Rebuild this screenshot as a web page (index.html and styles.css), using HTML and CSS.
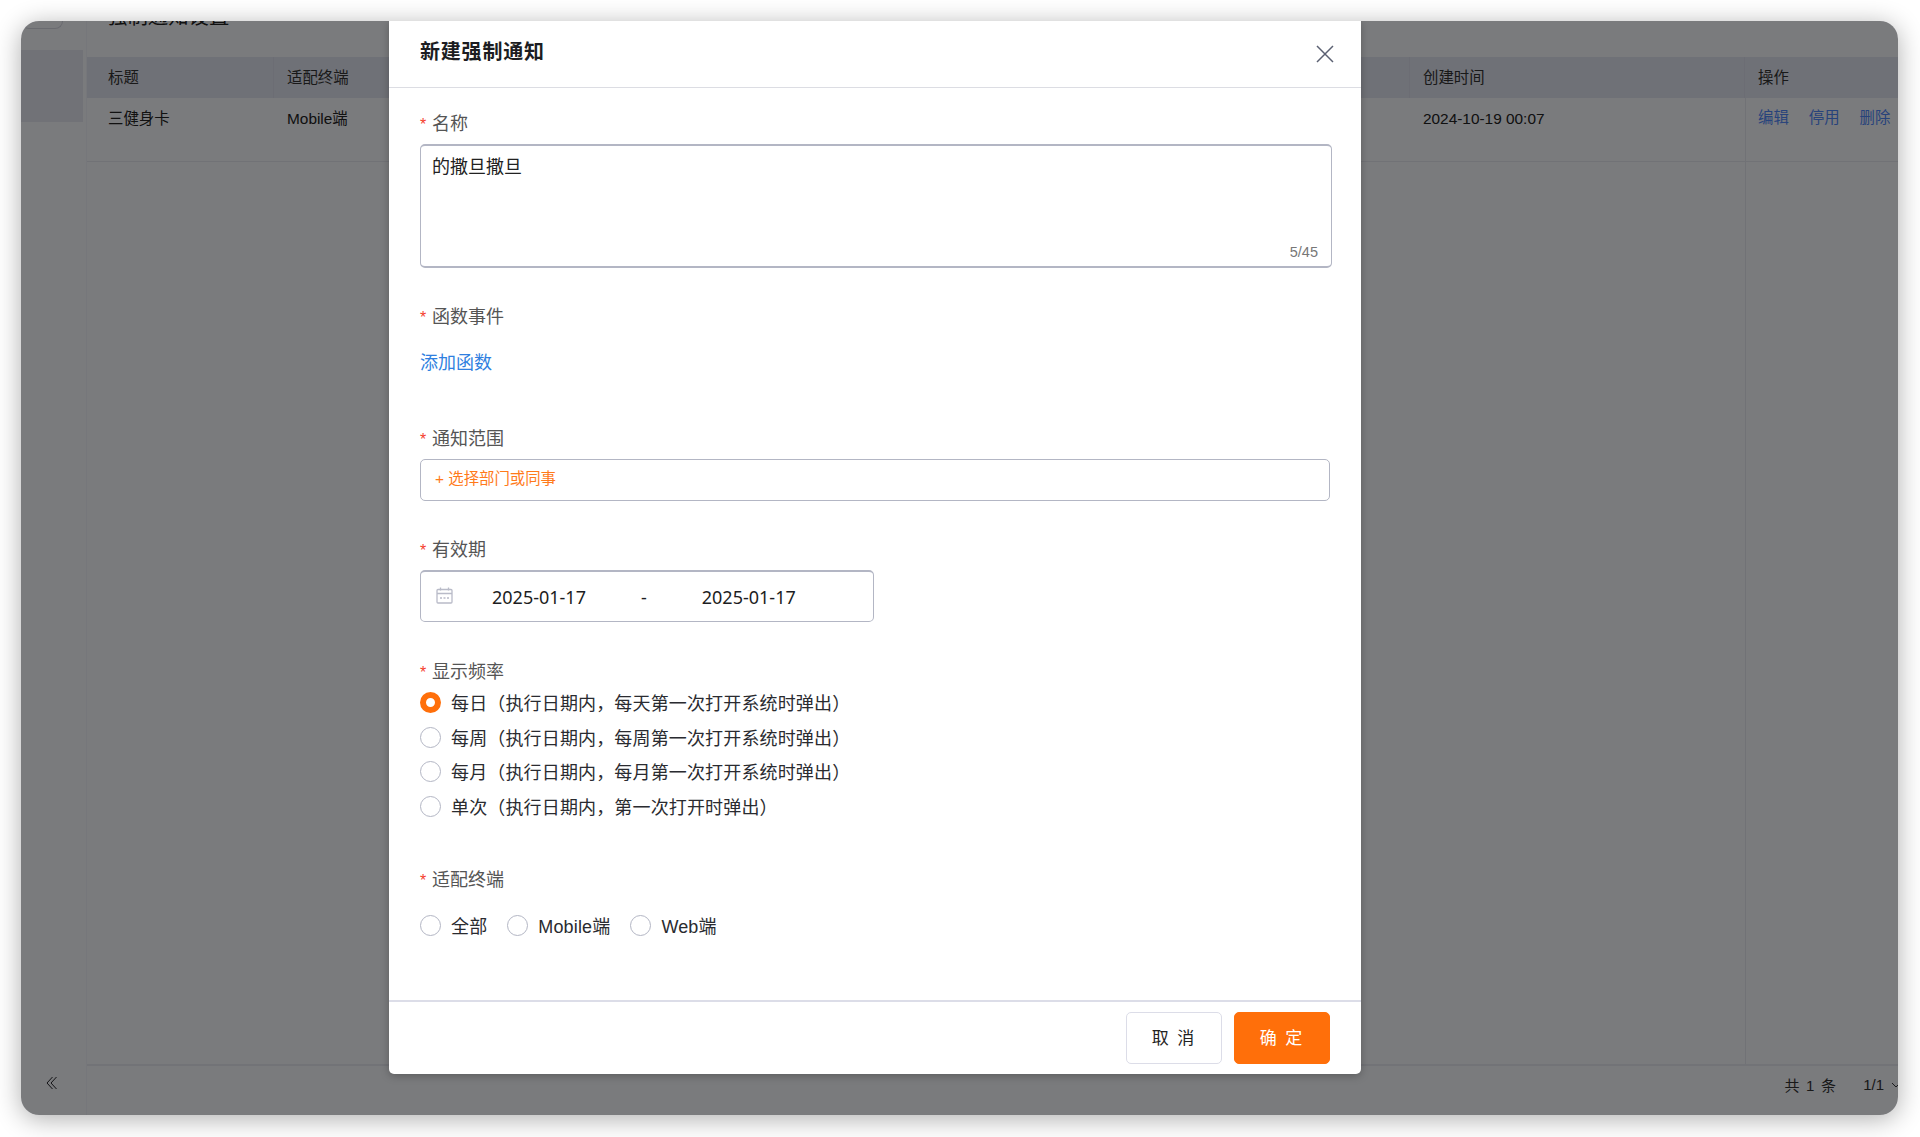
FILE: index.html
```html
<!DOCTYPE html>
<html lang="zh-CN">
<head>
    <meta charset="UTF-8">
    <meta name="viewport" content="width=device-width, initial-scale=1.0">
    <title>新建强制通知</title>
    <link rel="stylesheet" href="styles.css">
</head>
<body>
    <div class="window">
        <!-- Page behind the dialog -->
        <div class="page">
            <aside class="sidebar">
                <div class="sidebar-logo"></div>
                <div class="sidebar-item"></div>
                <div class="sidebar-collapse">
                    <svg width="11" height="14" viewBox="0 0 11 14" fill="none" stroke="#26272c" stroke-width="1">
                        <path d="M6.5 1 L1 7 L6.5 13"/>
                        <path d="M10.5 1 L5 7 L10.5 13"/>
                    </svg>
                </div>
            </aside>
            <main class="content">
                <div class="content-title"><h2>强制通知设置</h2></div>
                <div class="table">
                    <div class="table-head">
                        <div class="cell cell-title">标题</div>
                        <div class="cell cell-device">适配终端</div>
                        <div class="cell cell-time">创建时间</div>
                        <div class="cell cell-action">操作</div>
                    </div>
                    <div class="table-row">
                        <div class="cell cell-title">三健身卡</div>
                        <div class="cell cell-device">Mobile端</div>
                        <div class="cell cell-time">2024-10-19 00:07</div>
                        <div class="cell cell-action">
                            <a href="#">编辑</a>
                            <a href="#">停用</a>
                            <a href="#">删除</a>
                        </div>
                    </div>
                    <div class="table-fill"><div class="fill-action"></div></div>
                </div>
                <div class="pager">
                    <span class="pager-total">共 1 条</span>
                    <span class="pager-num">1/1</span>
                    <svg class="pager-arrow" width="10" height="6" viewBox="0 0 10 6" fill="none" stroke="#3a3b40" stroke-width="1">
                        <path d="M1 1 L5 5 L9 1"/>
                    </svg>
                </div>
            </main>
        </div>

        <div class="mask"></div>

        <!-- Dialog -->
        <div class="modal">
            <div class="modal-header">
                <h3>新建强制通知</h3>
                <svg class="modal-close" width="18" height="18" viewBox="0 0 18 18" fill="none" stroke="#5b6072" stroke-width="1.5">
                    <path d="M1 1 L17 17 M17 1 L1 17"/>
                </svg>
            </div>
            <form class="modal-body">
                <div class="form-item">
                    <div class="form-label"><span class="star">*</span>名称</div>
                    <div class="textarea">
                        <span>的撒旦撒旦</span>
                        <span class="count">5/45</span>
                    </div>
                </div>
                <div class="form-item item-func">
                    <div class="form-label label-func"><span class="star">*</span>函数事件</div>
                    <a class="add-link" href="#">添加函数</a>
                </div>
                <div class="form-item">
                    <div class="form-label"><span class="star">*</span>通知范围</div>
                    <div class="scope-box">+ 选择部门或同事</div>
                </div>
                <div class="form-item item-date">
                    <div class="form-label"><span class="star">*</span>有效期</div>
                    <div class="date-box">
                        <svg class="date-icon" width="17" height="17" viewBox="0 0 17 17" fill="none" stroke="#b9bbc8" stroke-width="1.3">
                            <rect x="1" y="2.5" width="15" height="13.5" rx="1"/>
                            <path d="M1 6.5 H16 M4.5 0.5 V3.5 M12.5 0.5 V3.5"/>
                            <path d="M4 11 H6 M7.5 11 H9.5 M11 11 H13"/>
                        </svg>
                        <span class="date-from">2025-01-17</span>
                        <span class="date-sep">-</span>
                        <span class="date-to">2025-01-17</span>
                    </div>
                </div>
                <div class="form-item item-rate">
                    <div class="form-label label-rate"><span class="star">*</span>显示频率</div>
                    <label class="radio-row"><i class="radio radio-on"></i>每日（执行日期内，每天第一次打开系统时弹出）</label>
                    <label class="radio-row"><i class="radio"></i>每周（执行日期内，每周第一次打开系统时弹出）</label>
                    <label class="radio-row"><i class="radio"></i>每月（执行日期内，每月第一次打开系统时弹出）</label>
                    <label class="radio-row"><i class="radio"></i>单次（执行日期内，第一次打开时弹出）</label>
                </div>
                <div class="form-item">
                    <div class="form-label label-device"><span class="star">*</span>适配终端</div>
                    <div class="radio-inline">
                        <label class="radio-row"><i class="radio"></i>全部</label>
                        <label class="radio-row"><i class="radio"></i>Mobile端</label>
                        <label class="radio-row"><i class="radio"></i>Web端</label>
                    </div>
                </div>
            </form>
            <div class="modal-footer">
                <button class="btn" type="button">取 消</button>
                <button class="btn btn-primary" type="button">确 定</button>
            </div>
        </div>
    </div>
</body>
</html>
```

FILE: styles.css
```css
* {
    box-sizing: border-box;
}
html, body {
    height: 100%;
}
body {
    margin: 0;
    padding: 21px 22px 22px 21px;
    background: #fff;
    font-family: "Liberation Sans", "Noto Sans CJK SC", sans-serif;
    color: #333;
}
.window {
    position: relative;
    height: 100%;
    overflow: hidden;
    border-radius: 18px;
    box-shadow: 0 4px 26px rgba(0, 0, 0, 0.32);
}
.page {
    display: flex;
    height: 100%;
    background: #f5f6fb;
    font-size: 15.4px;
}
.mask {
    position: absolute;
    inset: 0;
    background: rgba(0, 0, 0, 0.5);
}

/* sidebar */
.sidebar {
    position: relative;
    width: 66px;
    flex-shrink: 0;
    border-right: 1px solid #eceef6;
}
.sidebar-logo {
    width: 42px;
    height: 8px;
    border: 1px solid #d4d6e0;
    border-top: none;
    border-radius: 0 0 10px 10px;
}
.sidebar-item {
    width: 62px;
    height: 72px;
    margin-top: 21px;
    background: #e2e5ee;
}
.sidebar-collapse {
    position: absolute;
    left: 25px;
    bottom: 25px;
    line-height: 0;
}

/* table */
.content {
    flex: 1;
    display: flex;
    flex-direction: column;
    min-width: 0;
}
.content-title {
    height: 36px;
    overflow: hidden;
    padding-left: 20px;
}
.content-title h2 {
    margin: -16px 0 0;
    font-size: 20.4px;
    line-height: 24px;
    font-weight: 400;
    color: #222;
}
.table {
    flex: 1;
    display: flex;
    flex-direction: column;
    border-bottom: 2px solid #e4e6ee;
}
.table-head,
.table-row {
    display: flex;
}
.table-head {
    height: 41px;
    align-items: center;
    background: #dfe2ee;
    color: #333;
}
.table-row {
    height: 64px;
    padding-top: 9px;
    border-bottom: 1px solid #e2e4ec;
    color: #222;
}
.cell {
    flex-shrink: 0;
    height: 100%;
    display: flex;
    align-items: center;
    padding-left: 21px;
    line-height: 24px;
}
.table-row .cell {
    height: 24px;
}
.cell-title {
    width: 187px;
}
.cell-device {
    width: 1136px;
    padding-left: 13px;
}
.cell-time {
    width: 335px;
    padding-left: 13px;
}
.table-head .cell-title,
.table-head .cell-device,
.table-head .cell-time {
    border-right: 1px solid #d8dbe8;
}
.cell-action {
    flex: 1;
    min-width: 0;
    padding-left: 13px;
    gap: 20px;
    white-space: nowrap;
}
.table-row .cell-action {
    height: 63px;
    margin-top: -9px;
    padding-left: 12px;
    padding-bottom: 23px;
    border-left: 1px solid #e2e4ec;
}
.cell-action a {
    color: #4f86f7;
    text-decoration: none;
}
.table-fill {
    flex: 1;
    padding-left: 1658px;
}
.fill-action {
    height: 100%;
    border-left: 1px solid #e2e4ec;
}
.pager {
    height: 49px;
    display: flex;
    justify-content: flex-end;
    align-items: center;
    padding: 0 0 12px;
    margin-right: -3px;
    font-size: 15px;
    color: #333;
}
.pager-total {
    letter-spacing: 1.2px;
    margin-right: 26px;
}
.pager-num {
    margin-right: 7px;
}
.pager-arrow {
    flex-shrink: 0;
}

/* dialog */
.modal {
    position: absolute;
    left: 368px;
    top: 0;
    width: 972px;
    height: 1053px;
    display: flex;
    flex-direction: column;
    background: #fff;
    border-radius: 0 0 5px 5px;
    box-shadow: 0 2px 8px rgba(0, 0, 0, 0.25);
    font-size: 18px;
}
.modal-header {
    height: 67px;
    flex-shrink: 0;
    display: flex;
    justify-content: space-between;
    align-items: center;
    padding: 0 27px 0 31px;
    border-bottom: 1px solid #dcdde3;
}
.modal-header h3 {
    margin: -5px 0 0;
    font-size: 20px;
    line-height: 28px;
    font-weight: 700;
    letter-spacing: 0.8px;
    color: #1c1d22;
}
.modal-body {
    flex: 1;
    padding: 23px 29px 0 31px;
    min-height: 0;
}
.form-item {
    margin-bottom: 36px;
}
.form-label {
    height: 24px;
    margin-bottom: 9px;
    line-height: 26px;
    font-size: 18px;
    color: #555;
}
.star {
    display: inline-block;
    width: 12px;
    font-size: 16px;
    color: #f5402c;
}
.textarea {
    position: relative;
    height: 124px;
    padding: 9px 11px;
    border: 1px solid #b3b6c4;
    border-top-width: 2px;
    border-bottom-width: 2px;
    border-radius: 5px;
    line-height: 24px;
    color: #222;
}
.count {
    position: absolute;
    right: 13px;
    bottom: 4px;
    font-size: 14.5px;
    line-height: 20px;
    color: #777;
}
.item-func {
    margin-bottom: 51px;
}
.label-func {
    margin-bottom: 23px;
}
.add-link {
    display: block;
    line-height: 24px;
    color: #2f7fe0;
    text-decoration: none;
}
.scope-box {
    height: 42px;
    margin-right: 2px;
    padding: 0 14px;
    border: 1px solid #b3b6c4;
    border-radius: 5px;
    line-height: 38px;
    font-size: 15.4px;
    color: #ff7a1a;
}
.item-date {
    margin-bottom: 37px;
}
.date-box {
    display: flex;
    align-items: center;
    width: 454px;
    height: 52px;
    padding-left: 15px;
    border: 1px solid #b3b6c4;
    border-top-width: 2px;
    border-radius: 5px;
    font-family: "Noto Sans", "Noto Sans CJK SC", sans-serif;
    font-size: 18px;
    color: #1c1d22;
}
.date-icon {
    flex-shrink: 0;
    margin-top: -2px;
}
.date-from {
    margin-left: 39px;
}
.date-sep {
    margin-left: 55px;
}
.date-to {
    margin-left: 55px;
}
.item-rate {
    margin-bottom: 44px;
}
.label-rate {
    margin-bottom: 2px;
}
.radio-row {
    display: flex;
    align-items: center;
    height: 34.5px;
    letter-spacing: 0.15px;
    color: #2a2b30;
}
.radio {
    width: 21px;
    height: 21px;
    margin-top: 1px;
    margin-right: 10px;
    flex-shrink: 0;
    border: 1px solid #b3b6c4;
    border-radius: 50%;
}
.radio-on {
    border: 6px solid #ff6f0a;
}
.label-device {
    margin-bottom: 22px;
}
.radio-inline {
    display: flex;
    gap: 20px;
}
.radio-inline .radio-row {
    height: 24px;
}
.modal-footer {
    height: 74px;
    flex-shrink: 0;
    display: flex;
    justify-content: flex-end;
    gap: 12px;
    padding: 10px 31px 0 0;
    border-top: 2px solid #dcdde8;
}
.btn {
    width: 96px;
    height: 52px;
    padding: 0 0 3px;
    background: #fff;
    border: 1px solid #dcdde8;
    border-radius: 5px;
    font-family: inherit;
    font-size: 17px;
    letter-spacing: 2px;
    color: #222;
}
.btn-primary {
    background: #ff6f0a;
    border-color: #ff6f0a;
    color: #fff;
}
```
